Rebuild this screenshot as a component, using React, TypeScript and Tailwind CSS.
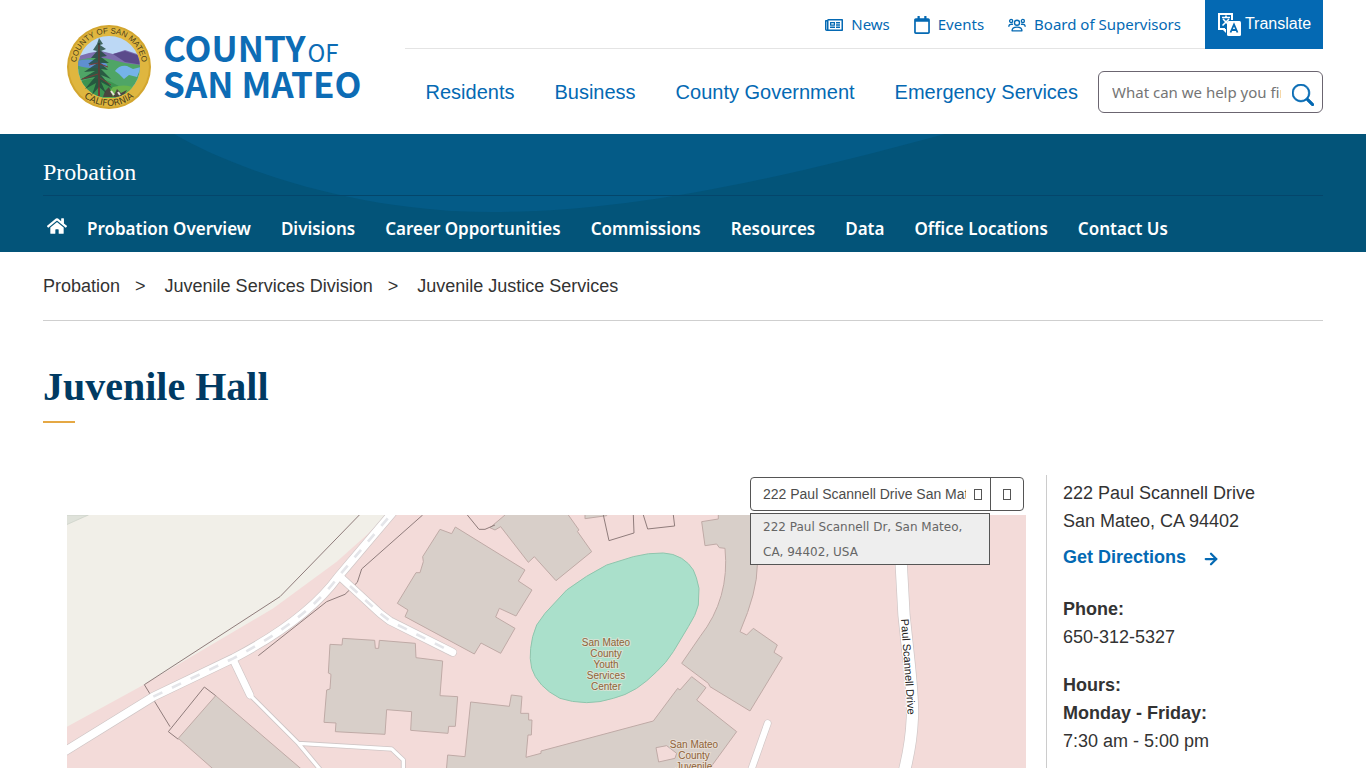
import React from "react";
import { FaRegNewspaper, FaRegCalendar, FaHome } from "react-icons/fa";
import { FiArrowRight } from "react-icons/fi";
import { BsSearch } from "react-icons/bs";

const topLinks = [
  { name: "News", icon: <FaRegNewspaper className="w-[18px] h-4" /> },
  { name: "Events", icon: <FaRegCalendar className="w-4 h-[18px]" /> },
  { name: "Board of Supervisors", icon: <PeopleIcon /> }
];

const mainLinks = ["Residents", "Business", "County Government", "Emergency Services"];

const departmentLinks = [
  "Probation Overview",
  "Divisions",
  "Career Opportunities",
  "Commissions",
  "Resources",
  "Data",
  "Office Locations",
  "Contact Us"
];

function PeopleIcon() {
  return (
    <svg viewBox="0 0 20 16" className="w-[18px] h-4" fill="none" stroke="currentColor" strokeWidth="1.5">
      <circle cx="10" cy="5.5" r="2.8" />
      <circle cx="3.5" cy="3.5" r="1.7" />
      <circle cx="16.5" cy="3.5" r="1.7" />
      <path d="M4.5 14.5 C4.5 11.3 6 10.4 10 10.4 S15.5 11.3 15.5 14.5 Z" strokeLinejoin="round" />
      <path d="M1 9.5 C1 7.5 2 7 5 7.2 M19 9.5 C19 7.5 18 7 15 7.2" strokeLinecap="round" />
    </svg>
  );
}

function TranslateIcon() {
  return (
    <svg viewBox="0 0 24 24" className="w-6 h-6" fill="none" stroke="currentColor">
      <path d="M15 8 V2 H2 V17 H8" strokeWidth="2" />
      <path d="M5 5.5 H13 M9 3.5 V5.5 M6 7 L12 13 M12 7 L5.5 13.5" strokeWidth="1.6" />
      <path d="M5 17 L9 21 V17 Z" fill="currentColor" stroke="none" />
      <rect x="10" y="9" width="14" height="15" rx="1.5" fill="currentColor" stroke="none" />
      <path d="M13.5 20.5 L17 12.5 L20.5 20.5 M14.8 18 H19.2" stroke="#0469b3" strokeWidth="1.8" />
    </svg>
  );
}

function Seal() {
  return (
    <svg viewBox="0 0 84 84" className="w-[84px] h-[84px] shrink-0" aria-label="County seal">
      <defs>
        <clipPath id="scene"><circle cx="42" cy="42" r="31" /></clipPath>
        <path id="sealTop" d="M9.5 47 A33 33 0 1 1 74.5 47" />
        <path id="sealBottom" d="M6 57 A39 39 0 0 0 78 57" />
      </defs>
      <circle cx="42" cy="42" r="42" fill="#d3a62f" />
      <circle cx="42" cy="42" r="40" fill="#dfb63f" />
      <g clipPath="url(#scene)">
        <rect width="84" height="84" fill="#bcd8f5" />
        <path d="M8 32 L22 28 L34 26 L46 29 L58 25 L76 31 V44 H8 Z" fill="#7d6fae" />
        <path d="M46 29 L58 26 L76 32 V40 L58 37 Z" fill="#5b4a8b" />
        <path d="M8 36 Q30 30 46 35 T78 40 V84 H8 Z" fill="#4fa566" />
        <path d="M10 36 Q24 32 38 38 Q44 41 34 43 Q18 44 9 40 Z" fill="#5f8fd0" />
        <path d="M48 46 Q52 40 60 41 L66 44 L74 42 L70 52 L62 50 L57 54 L52 49 Z" fill="#75b3e8" />
        <path d="M10 58 Q30 48 50 60 T76 56 V84 H10 Z" fill="#3c9350" />
        <path d="M46 62 Q60 58 70 64 L60 76 H34 Z" fill="#68b34c" />
        <path d="M38 66 L42 62 L46 72 L50 64 L54 68 L60 65 L56 72 H36 Z" fill="#4c4540" />
        <path d="M44 66 l3 4 M51 67 l2 3" stroke="#e5e2da" strokeWidth="2" />
      </g>
      <path d="M32 18 V71" stroke="#7b3b37" strokeWidth="2" />
      <path
        d="M32 13 L36 19 L33 20 L39 24 L34 26 L40 31 L34 32 L42 38 L34 38 L41 45 L34 44 L44 54 L34 50 L45 63 L34 57 L39 68 L32 62 L25 70 L29 58 L18 64 L28 52 L13 55 L28 46 L17 47 L29 39 L21 39 L29 33 L24 33 L30 26 L26 25 L30 19 Z"
        fill="#21483b"
        opacity=".8"
      />
      <path d="M32 20 V70 M15 54 L31 49 M44 60 L33 53 M22 40 L31 38 M41 42 L33 39" stroke="#783c39" strokeWidth="1" fill="none" />
      <text fontSize="8" fontFamily="Liberation Sans" fill="#4d3e19">
        <textPath href="#sealTop" startOffset="50%" textAnchor="middle">COUNTY OF SAN MATEO</textPath>
      </text>
      <text fontSize="9" fontFamily="DejaVu Sans" fill="#4d3e19">
        <textPath href="#sealBottom" startOffset="50%" textAnchor="middle">CALIFORNIA</textPath>
      </text>
    </svg>
  );
}

function StreetMap() {
  return (
    <svg
      viewBox="67 515 959 253"
      preserveAspectRatio="xMidYMid slice"
      className="block w-full h-[253px] bg-[#f3dbd9]"
      fontFamily="Liberation Sans"
    >
      <g transform="translate(60 505) scale(0.33333)">
        {/* Land use */}
        <path d="M0 0 H1010 L920 90 L830 170 L640 310 L250 540 L0 677 Z" fill="#f1efe8" />
        <path d="M0 30 H85 L0 68 Z" fill="#dfe2da" stroke="#c9cfc6" strokeWidth="2" />

        {/* Buildings */}
        <g fill="#d8cfc9" stroke="#bfaaa6" strokeWidth="3">
          <path d="M467 572 L355 700 L480 810 L745 810 Z" />
          <path d="M848 400 L944 406 L946 430 L956 430 L958 406 L1066 415 L1068 458 L1148 468 L1140 572 L1193 575 L1186 664 L1166 664 L1164 685 L1052 676 L1055 620 L980 614 L975 688 L826 680 L828 654 L792 652 L800 555 L810 552 L813 508 L805 504 L810 418 L846 420 Z" />
          <g transform="translate(960 0)">
            <path d="M180 73 L215 86 L226 66 L435 195 L415 228 L456 255 L408 333 L358 310 L347 336 L405 370 L362 445 L303 414 L283 447 L75 335 L84 315 L52 295 L108 203 L120 203 L130 170 L128 155 Z" />
            <path d="M345 75 L330 68 L375 30 V0 H545 L565 30 L597 75 L592 79 L635 140 L528 227 L463 155 L445 172 L362 65 Z" />
            <path d="M615 0 V41 L680 32 V0 Z" />
            <path d="M272 591 L388 604 L394 570 L426 574 L422 625 L446 625 V645 L456 645 L454 690 L444 690 L438 757 L483 745 V738 L820 648 L893 550 L900 555 L935 515 L978 548 L950 585 L1070 680 L975 810 H198 L203 750 L255 755 Z" />
            <path d="M828 728 L860 722 L890 745 L885 760 L836 771 Z" fill="#f3dbd9" />
            <path d="M965 50 L1015 42 V0 H1145 L1132 180 Q1132 260 1080 380 L1100 390 L1120 370 L1192 420 L1182 442 L1207 458 L1110 618 L990 545 L985 535 L905 475 L960 395 Q1050 280 1035 130 L1018 128 L1010 117 L975 122 Z" />
          </g>
        </g>

        {/* Courtyard */}
        <path
          transform="translate(960 0)"
          d="M850 144 Q880 145 905 160 Q928 175 940 195 Q950 215 957 250 L955 300 Q948 330 925 365 L880 440 Q858 475 830 500 Q800 530 770 550 Q735 572 700 580 Q660 593 620 593 Q575 592 540 580 Q505 562 485 540 Q462 515 455 490 Q448 460 452 430 Q455 395 470 360 L495 325 L560 255 Q620 210 680 180 L760 155 Q805 143 850 144 Z"
          fill="#aae0cb"
          stroke="#8fc5ad"
          strokeWidth="3"
        />

        {/* Fences */}
        <g fill="none" stroke="#8f7b7a" strokeWidth="3">
          <path d="M898 30 L660 275 L253 539 L330 665" />
          <path d="M467 572 L433 546 L325 680 L355 703" />
          <path d="M595 452 L800 290 L855 268 L892 232 L905 192 L1088 30" />
          <path d="M1222 30 L1257 73 H1275 L1305 60" />
          <path d="M1630 30 L1647 107 L1722 84 L1720 30" />
          <path d="M1750 30 L1763 72 L1844 63 L1840 30" />
        </g>

        {/* Roads, casing first */}
        <g fill="none" stroke="#cfc6c6" strokeLinejoin="round" strokeLinecap="round">
          <path d="M0 748 L280 575 L520 460 Q740 345 835 215 L1000 20" strokeWidth="28" />
          <path d="M840 215 L960 325 L990 348 L1178 442" strokeWidth="26" />
          <path d="M520 465 L570 570" strokeWidth="25" />
          <path d="M570 570 L715 715 L790 805 M715 715 L995 732 L1030 765 V800" strokeWidth="15" />
          <path d="M2514 0 L2532 330 L2548 480 Q2560 600 2557 640 Q2554 720 2530 810" strokeWidth="38" />
          <path d="M2123 655 L2070 805" strokeWidth="23" />
        </g>
        <g fill="none" stroke="#ffffff" strokeLinejoin="round" strokeLinecap="round">
          <path d="M0 748 L280 575 L520 460 Q740 345 835 215 L1000 20" strokeWidth="24" />
          <path d="M840 215 L960 325 L990 348 L1178 442" strokeWidth="22" />
          <path d="M520 465 L570 570" strokeWidth="21" />
          <path d="M570 570 L715 715 L790 805 M715 715 L995 732 L1030 765 V800" strokeWidth="10" />
          <path d="M2514 0 L2532 330 L2548 480 Q2560 600 2557 640 Q2554 720 2530 810" strokeWidth="34" />
          <path d="M2123 655 L2070 805" strokeWidth="19" />
        </g>
        <g fill="none" stroke="#e4e5e9" strokeWidth="8" strokeDasharray="30 32">
          <path d="M280 575 L520 460 Q740 345 835 215 L1000 20" />
          <path d="M870 243 L960 325 L990 348 L1178 442" />
        </g>
      </g>

      {/* Labels */}
      <g fontSize="10" fill="#8f6338" stroke="#f0e6dc" strokeWidth="2" strokeOpacity=".6" paintOrder="stroke" textAnchor="middle">
        <text x="606" y="646">San Mateo</text>
        <text x="606" y="657">County</text>
        <text x="606" y="668">Youth</text>
        <text x="606" y="679">Services</text>
        <text x="606" y="690">Center</text>
        <text x="694" y="748">San Mateo</text>
        <text x="694" y="759">County</text>
        <text x="694" y="770">Juvenile</text>
      </g>
      <text transform="translate(901 619) rotate(86)" fontSize="11" fill="#222222" stroke="#ffffff" strokeWidth="2" paintOrder="stroke">
        Paul Scannell Drive
      </text>
    </svg>
  );
}

export default function App() {
  return (
    <div className="bg-white text-[#333333] font-['Liberation_Sans',Arial,sans-serif]">
      {/* Header */}
      <header className="max-w-[1280px] h-[134px] mx-auto flex justify-between">
        <a href="#" className="flex items-center gap-3 ml-6 text-[#0d6cb5]">
          <Seal />
          <span className="flex flex-col pb-1 font-['Noto_Sans_CJK_SC',sans-serif] font-bold text-[35px] leading-[36px]">
            <span className="flex items-baseline gap-[2px]">
              COUNTY<span className="font-normal text-2xl leading-6">OF</span>
            </span>
            <span>SAN MATEO</span>
          </span>
        </a>
        <div className="w-[918px] text-[#0469b3]">
          <div className="flex h-[49px]">
            <nav className="flex-1 flex items-center justify-end gap-6 pt-px pr-6 border-b border-[#e4e4e4] font-['Noto_Sans',sans-serif] text-[15px]">
              {topLinks.map((link) => (
                <a key={link.name} href="#" className="flex items-center gap-2">
                  {link.icon}
                  {link.name}
                </a>
              ))}
            </nav>
            <button className="w-[118px] pb-[2px] flex items-center justify-center gap-1 bg-[#0469b3] text-white text-base">
              <TranslateIcon />
              Translate
            </button>
          </div>
          <div className="flex items-center justify-end h-[85px] gap-5">
            <nav className="flex gap-10 text-xl">
              {mainLinks.map((name) => (
                <a key={name} href="#">{name}</a>
              ))}
            </nav>
            <form className="w-[225px] h-[42px] flex items-center gap-[11px] pl-[13px] pr-2 pt-[2px] border border-[#6b6570] rounded-md font-['Noto_Sans',sans-serif]">
              <input
                aria-label="Search"
                placeholder="What can we help you find?"
                className="flex-1 min-w-0 text-[15px] outline-none placeholder:text-[#757575]"
              />
              <button type="button" aria-label="Submit search" className="pt-1">
                <BsSearch className="w-[22px] h-[22px]" stroke="currentColor" strokeWidth="0.5" />
              </button>
            </form>
          </div>
        </div>
      </header>

      {/* Department bar */}
      <div className="relative h-[118px] bg-[#035479] text-white overflow-hidden">
        <svg viewBox="0 0 1366 118" className="absolute top-0 left-0 w-[1366px] h-[118px]">
          <path d="M174 0 C240 38 360 78 492 78 C610 78 740 56 945 0 Z" fill="#045b87" />
        </svg>
        <div className="relative max-w-[1280px] mx-auto">
          <div className="h-[62px] pt-[14px] border-b border-[#04466b]">
            <a href="#" className="font-['Liberation_Serif',serif] text-2xl leading-12">Probation</a>
          </div>
          <nav className="flex items-center gap-[30px] h-[56px] pt-[10px] pl-1 font-['Noto_Sans',sans-serif] text-[17px] font-semibold">
            <a href="#" aria-label="Home" className="-mr-[10px] pb-[6px]">
              <FaHome className="w-5 h-5" />
            </a>
            {departmentLinks.map((name) => (
              <a key={name} href="#">{name}</a>
            ))}
          </nav>
        </div>
      </div>

      {/* Page content */}
      <main className="max-w-[1280px] mx-auto">
        <nav className="flex gap-[15px] h-[69px] items-center border-b border-[#cfcfcf] text-lg">
          <a href="#">Probation</a>
          <span className="mr-1">&gt;</span>
          <a href="#">Juvenile Services Division</a>
          <span className="mr-1">&gt;</span>
          <a href="#">Juvenile Justice Services</a>
        </nav>
        <h1 className="pt-10 font-['Liberation_Serif',serif] text-[40px] leading-[52px] font-bold text-[#003a63]">
          Juvenile Hall
        </h1>
        <div className="mt-2 mb-[52px] w-8 h-[2px] bg-[#e5a844]" />

        <div className="flex gap-5">
          <section className="flex-1 pl-6">
            <div className="flex justify-end h-10 pt-[2px] pr-[2px]">
              <form className="relative flex w-[274px] h-[34px] border border-[#555555] rounded-[4px] bg-white text-[#4c4c4c]">
                <input
                  aria-label="Map location"
                  defaultValue="222 Paul Scannell Drive San Mateo CA 94402"
                  className="flex-1 min-w-0 ml-3 text-sm outline-none"
                />
                <button type="button" aria-label="Clear" className="w-6 flex items-center justify-center">
                  <span className="w-2 h-[11px] border border-[#555555]" />
                </button>
                <button type="button" aria-label="Search map" className="w-[33px] flex items-center justify-center border-l border-[#555555]">
                  <span className="w-2 h-[11px] border border-[#555555]" />
                </button>
                <ul className="absolute top-[35px] -left-px w-[240px] h-[52px] px-3 pt-px border border-[#555555] bg-[#eeeeee] font-['DejaVu_Sans',sans-serif] text-xs leading-[25px] text-[#666666]">
                  <li>222 Paul Scannell Dr, San Mateo, CA, 94402, USA</li>
                </ul>
              </form>
            </div>
            <StreetMap />
          </section>

          <aside className="w-[277px] pl-4 pt-1 border-l border-[#cccccc] text-lg leading-7">
            <p>222 Paul Scannell Drive</p>
            <p>San Mateo, CA 94402</p>
            <a href="#" className="flex items-center gap-4 mt-2 font-bold text-[#0469b3]">
              Get Directions
              <FiArrowRight className="w-[18px] h-[18px] mt-1" strokeWidth="3" />
            </a>
            <p className="mt-6 font-bold">Phone:</p>
            <p>650-312-5327</p>
            <p className="mt-5 font-bold">Hours:</p>
            <p className="font-bold">Monday - Friday:</p>
            <p>7:30 am - 5:00 pm</p>
          </aside>
        </div>
      </main>
    </div>
  );
}
